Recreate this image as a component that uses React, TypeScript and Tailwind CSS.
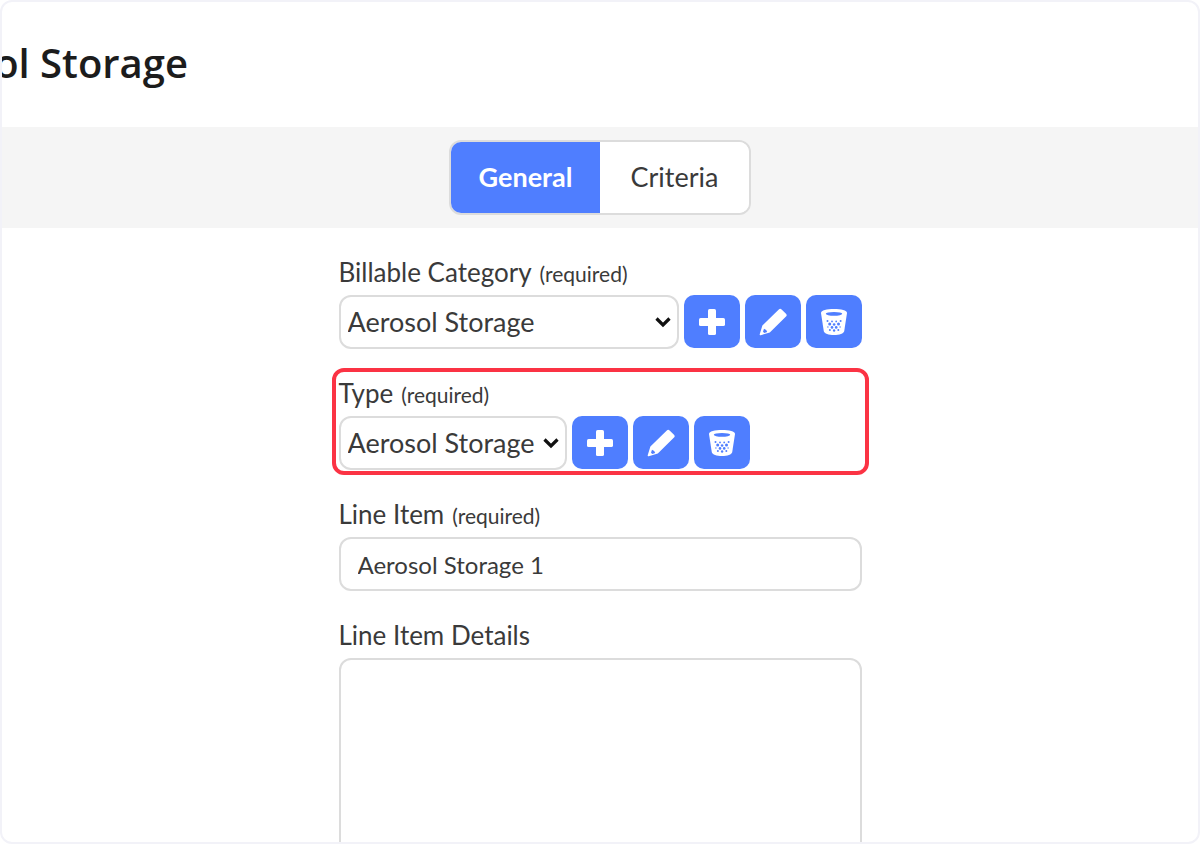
import React, { useState } from 'react';
import clsx from 'clsx';

type TabName = 'General' | 'Criteria';

const TABS: TabName[] = ['General', 'Criteria'];

function PlusIcon() {
  return (
    <svg width={26} height={26} viewBox="0 0 26 26" fill="currentColor" aria-hidden="true">
      <rect x="9" y="0" width="8" height="26" rx="1.6" />
      <rect x="0" y="9" width="26" height="8" rx="1.6" />
    </svg>
  );
}

function PencilIcon() {
  return (
    <svg width={28} height={28} viewBox="0 0 28 28" fill="currentColor" aria-hidden="true">
      {/* Body, with a small notch at the tip */}
      <path
        fillRule="evenodd"
        d="M19.8 1.4a2 2 0 0 1 2.8 0l4.400 4.400a2 2 0 0 1 0 2.800L10.800 24.400 1.700 27.200a.8.8 0 0 1-1-1L3.400 17.400ZM5 20.800l-1 3 1.300 1.200 2.900-1-1-2Z"
      />
    </svg>
  );
}

function TrashIcon() {
  return (
    <svg width={26} height={26} viewBox="0 0 26 26" aria-hidden="true">
      <path
        fill="currentColor"
        d="M0 4C0 1.4 5.8 0 13 0s13 1.4 13 4l-2.8 18.2C22.7 24.6 18.4 26 13 26S3.3 24.6 2.8 22.2Z"
      />
      <ellipse cx="13" cy="4.8" rx="8.2" ry="1.9" fill="#4f7eff" />
      {/* Mesh holes */}
      <g fill="#4f7eff">
        <circle cx="6.5" cy="12" r="1" />
        <circle cx="11" cy="12.4" r="0.9" />
        <circle cx="15.2" cy="12.4" r="0.9" />
        <circle cx="19.6" cy="12" r="1" />
        <circle cx="8.7" cy="15.1" r="1.5" />
        <circle cx="13.1" cy="15.5" r="1.3" />
        <circle cx="17.5" cy="15.1" r="1.5" />
        <circle cx="6.9" cy="18" r="0.7" />
        <circle cx="11" cy="18.4" r="1.3" />
        <circle cx="15.2" cy="18.4" r="1.3" />
        <circle cx="19.1" cy="18" r="0.7" />
        <circle cx="8.9" cy="21" r="1" />
        <circle cx="13.1" cy="21.5" r="1.2" />
        <circle cx="17.3" cy="21" r="1" />
      </g>
    </svg>
  );
}

function IconButton({ label, children }: { label: string; children: React.ReactNode }) {
  return (
    <button
      type="button"
      aria-label={label}
      className="flex h-[53px] w-14 shrink-0 items-center justify-center rounded-[10px] bg-[#4f7eff] text-white"
    >
      {children}
    </button>
  );
}

interface FieldLabelProps {
  htmlFor: string;
  text: string;
  required?: boolean;
}

function FieldLabel({ htmlFor, text, required }: FieldLabelProps) {
  return (
    <label htmlFor={htmlFor} className="block text-[26px] leading-9">
      {text}
      {required && <span className="ml-2 text-[21px] leading-none">(required)</span>}
    </label>
  );
}

interface SelectRowProps {
  id: string;
  name: string;
  options: string[];
  fill?: boolean;
}

function SelectRow({ id, name, options, fill }: SelectRowProps) {
  return (
    <div className="flex items-start gap-[5px]">
      <div className={clsx('relative', fill ? 'min-w-0 flex-1' : 'w-[228px]')}>
        <select
          id={id}
          className="h-[54px] w-full appearance-none rounded-xl border-2 border-[#dcdcdc] bg-white pl-[7px] pr-6 text-[27px] leading-9"
        >
          {options.map((option) => (
            <option key={option}>{option}</option>
          ))}
        </select>
        <svg
          width={16}
          height={11}
          viewBox="0 0 16 11"
          className="pointer-events-none absolute right-2 top-[22px]"
          fill="none"
          stroke="#111"
          strokeWidth={3.2}
          aria-hidden="true"
        >
          <path d="M1.5 1.5 8 8l6.5-6.5" />
        </svg>
      </div>
      <IconButton label={`Add ${name}`}>
        <PlusIcon />
      </IconButton>
      <IconButton label={`Edit ${name}`}>
        <PencilIcon />
      </IconButton>
      <IconButton label={`Delete ${name}`}>
        <TrashIcon />
      </IconButton>
    </div>
  );
}

export default function App() {
  const [tab, setTab] = useState<TabName>('General');

  return (
    <div className="h-screen overflow-hidden rounded-xl border-2 border-[#f2f2f8] bg-white font-['Lato',sans-serif] text-[#3a3a3a]">
      {/* Page title, scrolled partly off the left edge */}
      <header className="pb-9 pt-[33px]">
        <div className="flex w-[186px] justify-end overflow-hidden">
          <h1 className="whitespace-nowrap font-['Open_Sans',sans-serif] text-[40px] font-semibold leading-[56px] text-[#1c1c1c]">
            Aerosol Storage
          </h1>
        </div>
      </header>

      <nav className="flex justify-center bg-[#f5f5f5] py-[13px]">
        <div className="flex overflow-hidden rounded-xl border-2 border-[#dcdcdc] bg-white">
          {TABS.map((name) => (
            <button
              key={name}
              type="button"
              onClick={() => setTab(name)}
              className={clsx(
                'h-[71px] w-[149px] text-[27px]',
                tab === name ? 'bg-[#4f7eff] font-bold text-white' : 'bg-white',
              )}
            >
              {name}
            </button>
          ))}
        </div>
      </nav>

      <form className="mx-auto flex max-w-[523px] flex-col gap-[26px] pt-[26px]">
        <div className="flex flex-col gap-[5px]">
          <FieldLabel htmlFor="category" text="Billable Category" required />
          <SelectRow id="category" name="category" options={['Aerosol Storage']} fill />
        </div>

        <div className="relative flex flex-col gap-[5px]">
          <FieldLabel htmlFor="type" text="Type" required />
          <SelectRow id="type" name="type" options={['Aerosol Storage']} />
          {/* Highlight frame */}
          <div className="pointer-events-none absolute -inset-x-[7px] -bottom-[5px] -top-[7px] rounded-xl border-4 border-[#fb3344]" />
        </div>

        <div className="flex flex-col gap-[5px]">
          <FieldLabel htmlFor="line-item" text="Line Item" required />
          <input
            id="line-item"
            type="text"
            defaultValue="Aerosol Storage 1"
            className="h-[54px] w-full rounded-xl border-2 border-[#dcdcdc] bg-white px-[17px] text-2xl"
          />
        </div>

        <div className="flex flex-col gap-[5px]">
          <FieldLabel htmlFor="details" text="Line Item Details" />
          <textarea
            id="details"
            className="h-64 w-full resize-none rounded-xl border-2 border-[#dcdcdc] bg-white px-[17px] py-3 text-2xl"
          />
        </div>
      </form>
    </div>
  );
}
